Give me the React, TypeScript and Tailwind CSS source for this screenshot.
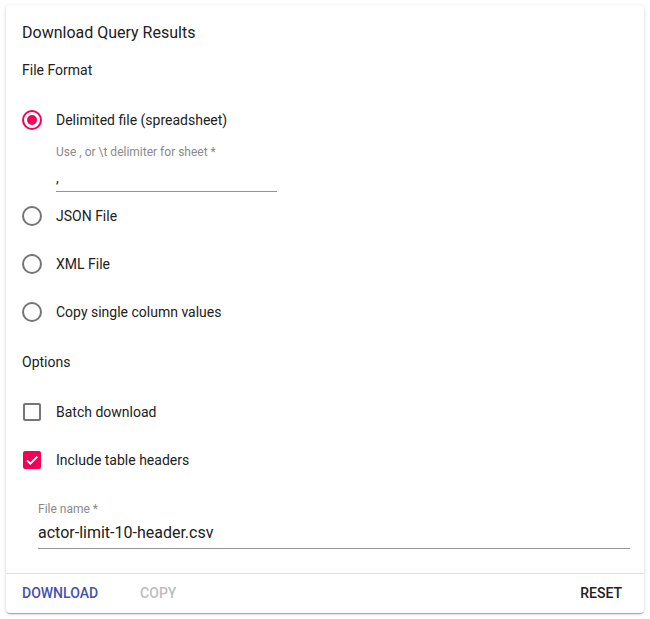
import React from "react";

function Radio({ checked }: { checked?: boolean }) {
    return (
        <div className={`w-5 h-5 rounded-full border-2 flex items-center justify-center ${checked ? "border-[#f50057]" : "border-[#757575]"}`}>
            {checked && <div className="w-2.5 h-2.5 rounded-full bg-[#f50057]"></div>}
        </div>
    );
}

function Checkbox({ checked }: { checked?: boolean }) {
    if (checked) {
        return (
            <div className="w-[18px] h-[18px] rounded-[2px] bg-[#f50057] flex items-center justify-center">
                <svg width="16" height="16" viewBox="0 0 24 24">
                    <path d="M4.5 12.5l5 5L20 7" fill="none" stroke="white" strokeWidth="3" />
                </svg>
            </div>
        );
    }
    return <div className="w-[18px] h-[18px] rounded-[2px] border-2 border-[#757575]"></div>;
}

function Row({ control, label }: { control: React.ReactNode; label: string }) {
    return (
        <div className="h-12 flex items-center">
            <div className="w-5 flex justify-center">{control}</div>
            <span className="ml-[14px] text-[14px] text-[#212121]">{label}</span>
        </div>
    );
}

export default function App() {
    return (
        <div className="w-[650px] h-[619px] bg-white pt-[5px] pl-[6px]" style={{ fontFamily: "Roboto, 'Liberation Sans', sans-serif" }}>
            <div className="
                w-[638px] h-[608px]
                bg-white rounded
                shadow-[0_2px_1px_-1px_rgba(0,0,0,0.2),0_1px_1px_0_rgba(0,0,0,0.14),0_1px_4px_0_rgba(0,0,0,0.14)]
                flex flex-col
            ">
                <div className="px-4 pt-4">
                    <h1 className="text-[16px] leading-[22px] text-[#212121] mt-[1px]">Download Query Results</h1>

                    <h2 className="mt-[16px] text-[14px] leading-5 text-[#212121]">File Format</h2>

                    <div className="mt-4">
                        <Row control={<Radio checked />} label="Delimited file (spreadsheet)" />

                        {/* delimiter field */}
                        <div className="ml-[34px] w-[221px] h-12 flex flex-col">
                            <span className="text-[12px] leading-4 text-[#8a8a8a]">Use , or \t delimiter for sheet *</span>
                            <span className="mt-[8px] text-[14px] leading-5 text-[#212121]">,</span>
                            <div className="mt-[3px] border-b border-[#949494]"></div>
                        </div>

                        <Row control={<Radio />} label="JSON File" />
                        <Row control={<Radio />} label="XML File" />
                        <Row control={<Radio />} label="Copy single column values" />
                    </div>

                    <h2 className="mt-4 text-[14px] leading-5 text-[#212121]">Options</h2>

                    <div className="mt-4">
                        <Row control={<Checkbox />} label="Batch download" />
                        <Row control={<Checkbox checked />} label="Include table headers" />
                    </div>

                    {/* file name field */}
                    <div className="ml-4 mr-[-2px] mt-[17px] flex flex-col">
                        <span className="text-[12px] leading-4 text-[#8a8a8a]">File name *</span>
                        <span className="mt-[6px] text-[16px] leading-5 text-[#212121]">actor-limit-10-header.csv</span>
                        <div className="mt-[5px] border-b border-[#949494]"></div>
                    </div>
                </div>

                <div className="mt-auto border-t border-[#e0e0e0] h-[40px] flex items-center px-4">
                    <button className="text-[14px] font-medium uppercase text-[#3f51b5]">Download</button>
                    <button className="ml-[42px] text-[14px] font-medium uppercase text-[#bdbdbd]">Copy</button>
                    <button className="ml-auto mr-[6px] text-[14px] font-medium uppercase text-[#212121]">Reset</button>
                </div>
            </div>
        </div>
    );
}
